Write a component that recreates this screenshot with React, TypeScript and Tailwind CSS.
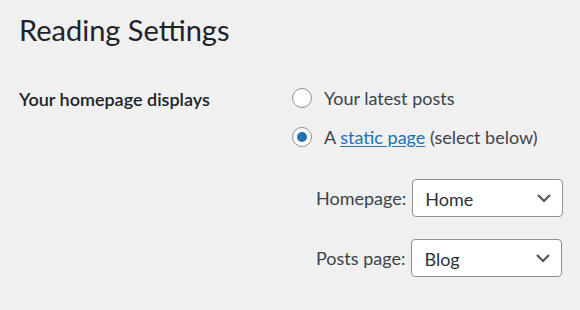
const font = { fontFamily: 'Lato, "Open Sans", sans-serif' };

function Chevron() {
  return (
    <svg width="16" height="10" viewBox="0 0 16 10" className="text-[#50575e]">
      <path d="M2 2l6 6 6-6" fill="none" stroke="currentColor" strokeWidth="2.2" />
    </svg>
  );
}

function Radio({ checked }: { checked?: boolean }) {
  return (
    <span className="flex h-5 w-5 shrink-0 items-center justify-center rounded-full border border-[#8c8f94] bg-white">
      {checked && <span className="h-[10px] w-[10px] rounded-full bg-[#2271b1]" />}
    </span>
  );
}

function Select({ value }: { value: string }) {
  return (
    <div className="box-border flex h-[38px] w-[151px] items-center justify-between rounded-[4px] border border-[#8c8f94] bg-white pl-3 pr-2.5 text-[18px] text-[#2c3338]">
      <span className="pt-0.5">{value}</span>
      <Chevron />
    </div>
  );
}

export default function App() {
  return (
    <div className="min-h-[310px] w-full bg-[#f0f0f1] px-[19px] pt-[10px]" style={font}>
      <h1 className="text-[29px] leading-[40px] font-normal text-[#1d2327]">Reading Settings</h1>
      <div className="mt-[34px] flex">
        <div className="w-[273px] shrink-0 pt-[2px] text-[18px] font-semibold text-[#1d2327]">
          Your homepage displays
        </div>
        <div className="flex flex-col text-[18px] text-[#3c434a]">
          <label className="flex h-[28px] items-center gap-3">
            <Radio />
            <span>Your latest posts</span>
          </label>
          <label className="mt-[11px] flex h-[28px] items-center gap-3">
            <Radio checked />
            <span>
              A <span className="text-[#2271b1] underline underline-offset-2">static page</span> (select below)
            </span>
          </label>
          <div className="mt-[28px] ml-[24px] flex flex-col gap-[22px]">
            <div className="flex items-center gap-[6px]">
              <span>Homepage:</span>
              <Select value="Home" />
            </div>
            <div className="flex items-center gap-[6px]">
              <span>Posts page:</span>
              <Select value="Blog" />
            </div>
          </div>
        </div>
      </div>
    </div>
  );
}
